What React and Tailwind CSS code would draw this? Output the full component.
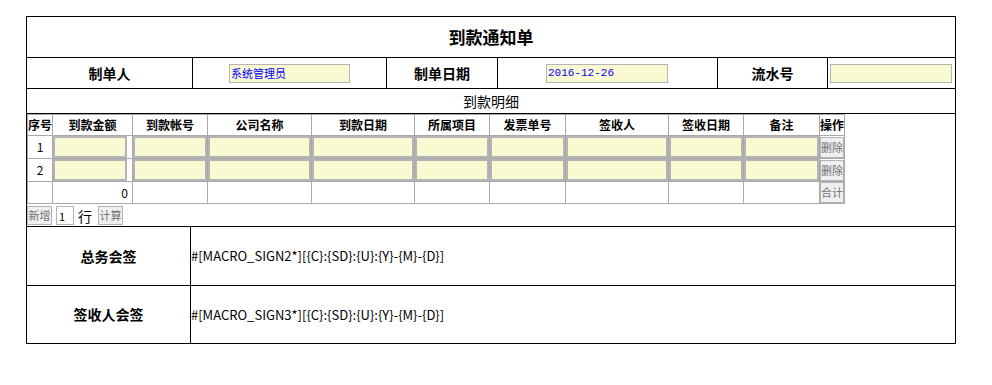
import React from 'react'

const cols = [
  { label: '序号', w: 'w-[25px]' },
  { label: '到款金额', w: 'w-[80px]' },
  { label: '到款帐号', w: 'w-[75px]' },
  { label: '公司名称', w: 'w-[104px]' },
  { label: '到款日期', w: 'w-[103px]' },
  { label: '所属项目', w: 'w-[75px]' },
  { label: '发票单号', w: 'w-[76px]' },
  { label: '签收人', w: 'w-[103px]' },
  { label: '签收日期', w: 'w-[75px]' },
  { label: '备注', w: 'w-[76px]' },
  { label: '操作', w: 'w-[25px]' },
]

const cell = 'border border-[#a9a9a9] p-0'
const field = 'block h-[22px] w-full border-2 border-[#b4b4b4] bg-[#fafad2] outline-none'

function SmallBtn({ children, className = '' }) {
  return (
    <button className={`h-[19px] w-[24px] border border-[#b4b4b4] bg-[#f0f0f0] text-[11px] leading-none text-[#707070] ${className}`}>
      {children}
    </button>
  )
}

function DetailRow({ n }) {
  return (
    <tr className="h-[23px]">
      <td className={`${cell} text-center text-[12px]`}>{n}</td>
      <td className={cell}>
        <input className={`${field} !w-[74px]`} readOnly />
      </td>
      {[0, 1, 2, 3, 4, 5, 6, 7].map(i => (
        <td key={i} className={cell}>
          <input className={field} readOnly />
        </td>
      ))}
      <td className={cell}>
        <SmallBtn className="h-[21px]">删除</SmallBtn>
      </td>
    </tr>
  )
}

export default function App() {
  return (
    <div className="min-h-[385px] bg-white pt-[16px] font-['Noto_Sans_CJK_SC',sans-serif] text-black">
      <div className="ml-[26px] w-[930px] border border-black">
        {/* title */}
        <div className="flex h-[41px] items-center justify-center border-b border-black text-[17px] font-bold">
          到款通知单
        </div>

        {/* header fields */}
        <div className="flex h-[31px] border-b border-black text-[14px] font-bold">
          <div className="flex w-[166px] items-center justify-center border-r border-black">制单人</div>
          <div className="flex w-[194px] items-center border-r border-black pl-[36px]">
            <div className="h-[19px] w-[121px] border border-[#b4b4b4] bg-[#fafad2] pl-[1px] text-[11px] font-normal leading-[17px] text-[#0000ff]">
              系统管理员
            </div>
          </div>
          <div className="flex w-[111px] items-center justify-center border-r border-black">制单日期</div>
          <div className="flex w-[220px] items-center border-r border-black pl-[48px]">
            <div className="h-[19px] w-[122px] border border-[#b4b4b4] bg-[#fafad2] pl-[1px] font-['Liberation_Mono',monospace] text-[11px] font-normal leading-[17px] text-[#0000ff]">
              2016-12-26
            </div>
          </div>
          <div className="flex w-[110px] items-center justify-center border-r border-black">流水号</div>
          <div className="flex flex-1 items-center pl-[2px]">
            <div className="h-[19px] w-[122px] border border-[#b4b4b4] bg-[#fafad2]" />
          </div>
        </div>

        {/* detail caption */}
        <div className="flex h-[25px] items-center justify-center border-b border-black text-[14px]">
          到款明细
        </div>

        {/* detail table */}
        <div className="h-[113px] border-b border-black">
          <table className="table-fixed border-collapse text-[12px]">
            <colgroup>
              {cols.map(c => (
                <col key={c.label} className={c.w} />
              ))}
            </colgroup>
            <thead>
              <tr className="h-[21px]">
                {cols.map(c => (
                  <th key={c.label} className={`${cell} text-center font-bold`}>
                    {c.label}
                  </th>
                ))}
              </tr>
            </thead>
            <tbody>
              <DetailRow n="1" />
              <DetailRow n="2" />
              <tr className="h-[22px]">
                <td className={cell} />
                <td className={`${cell} pr-[4px] text-right`}>0</td>
                {[0, 1, 2, 3, 4, 5, 6, 7].map(i => (
                  <td key={i} className={cell} />
                ))}
                <td className={cell}>
                  <SmallBtn className="h-[21px]">合计</SmallBtn>
                </td>
              </tr>
            </tbody>
          </table>
          <div className="flex h-[23px] items-center gap-[4px]">
            <SmallBtn className="w-[25px]">新增</SmallBtn>
            <input
              className="h-[19px] w-[18px] border border-[#b4b4b4] pl-[2px] text-[11px] outline-none"
              defaultValue="1"
              readOnly
            />
            <span className="text-[14px] leading-none">行</span>
            <SmallBtn className="ml-[2px] w-[25px]">计算</SmallBtn>
          </div>
        </div>

        {/* sign rows */}
        <div className="flex h-[59px] border-b border-black">
          <div className="flex w-[164px] items-center justify-center border-r border-black text-[14px] font-bold">
            总务会签
          </div>
          <div className="flex items-center text-[13px]">#[MACRO_SIGN2*][{'{C}:{SD}:{U}:{Y}-{M}-{D}'}]</div>
        </div>
        <div className="flex h-[57px]">
          <div className="flex w-[164px] items-center justify-center border-r border-black text-[14px] font-bold">
            签收人会签
          </div>
          <div className="flex items-center text-[13px]">#[MACRO_SIGN3*][{'{C}:{SD}:{U}:{Y}-{M}-{D}'}]</div>
        </div>
      </div>
    </div>
  )
}
